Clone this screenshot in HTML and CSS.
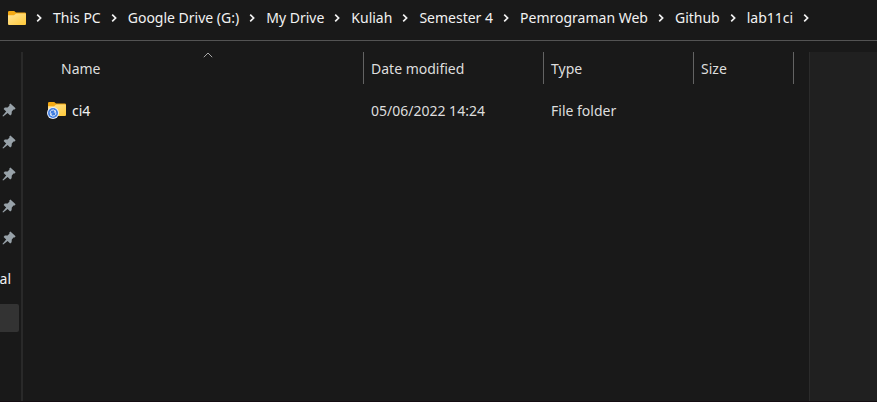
FILE: index.html
```html
<!DOCTYPE html>
<html lang="en">
<head>
<meta charset="utf-8">
<title>lab11ci</title>
<link rel="stylesheet" href="styles.css">
</head>
<body>
<svg class="defs" aria-hidden="true">
  <defs>
    <linearGradient id="gold" x1="0" y1="0" x2="1" y2="1">
      <stop offset="0" stop-color="#ffe49a"/><stop offset="1" stop-color="#ffc937"/>
    </linearGradient>
    <symbol id="folder" viewBox="0 0 18 14">
      <path d="M0 1.2Q0 0 1.2 0H6.2L8 1.5H16.8Q18 1.5 18 2.6V6H0Z" fill="#f4a913"/>
      <path d="M0 4.2H6L8.2 2.4H17.2Q18 2.4 18 3.2V13Q18 14 17 14H1Q0 14 0 13Z" fill="url(#gold)"/>
    </symbol>
    <symbol id="chevron" viewBox="0 0 7 8">
      <path d="M1.2 0.7L4.6 4L1.2 7.3" fill="none" stroke="#f2f2f2" stroke-width="1.7"/>
    </symbol>
    <symbol id="pin" viewBox="0 0 14 14">
      <path d="M8.4 0.4L13.6 5.2L12.6 6.6L11.5 6.4L9.8 8.6L9.6 11.2L8.2 12.4L5.6 10L1.2 13.6L0.4 12.9L4.2 8.6L1.6 6L2.8 4.6L5.6 4.4L7.5 2.6L7.3 1.4Z" fill="#98a2a9"/>
    </symbol>
  </defs>
</svg>
<header class="address">
  <svg class="folder" aria-hidden="true"><use href="#folder"/></svg>
  <svg class="chevron" aria-hidden="true"><use href="#chevron"/></svg>
  <a href="#">This PC</a>
  <svg class="chevron" aria-hidden="true"><use href="#chevron"/></svg>
  <a href="#">Google Drive (G:)</a>
  <svg class="chevron" aria-hidden="true"><use href="#chevron"/></svg>
  <a href="#">My Drive</a>
  <svg class="chevron" aria-hidden="true"><use href="#chevron"/></svg>
  <a href="#">Kuliah</a>
  <svg class="chevron" aria-hidden="true"><use href="#chevron"/></svg>
  <a href="#">Semester 4</a>
  <svg class="chevron" aria-hidden="true"><use href="#chevron"/></svg>
  <a href="#">Pemrograman Web</a>
  <svg class="chevron" aria-hidden="true"><use href="#chevron"/></svg>
  <a href="#">Github</a>
  <svg class="chevron" aria-hidden="true"><use href="#chevron"/></svg>
  <a href="#">lab11ci</a>
  <svg class="chevron" aria-hidden="true"><use href="#chevron"/></svg>
</header>
<div class="body">
  <nav class="sidebar">
    <div class="entry"><svg class="pin" aria-hidden="true"><use href="#pin"/></svg></div>
    <div class="entry"><svg class="pin" aria-hidden="true"><use href="#pin"/></svg></div>
    <div class="entry"><svg class="pin" aria-hidden="true"><use href="#pin"/></svg></div>
    <div class="entry"><svg class="pin" aria-hidden="true"><use href="#pin"/></svg></div>
    <div class="entry"><svg class="pin" aria-hidden="true"><use href="#pin"/></svg></div>
    <a class="label" href="#">al</a>
    <div class="selected"></div>
  </nav>
  <main class="files">
    <table>
      <colgroup><col class="c-name"><col class="c-date"><col class="c-type"><col class="c-size"></colgroup>
      <thead>
        <tr>
          <th class="name">Name
            <svg class="sort" viewBox="0 0 10 6" aria-hidden="true"><path d="M0.8 5.2L5 1L9.2 5.2" fill="none" stroke="#a8a8a8"/></svg>
          </th>
          <th>Date modified</th><th>Type</th><th>Size</th>
        </tr>
      </thead>
      <tbody>
        <tr>
          <td><div class="file">
            <svg class="synced" viewBox="0 0 20 18" aria-hidden="true">
              <use href="#folder" x="1" y="0" width="18" height="14"/>
              <circle cx="6" cy="11" r="6" fill="#e8eefb"/>
              <circle cx="6" cy="11" r="5" fill="#3f7de0"/>
              <path d="M3.2 11.6A2.8 2.8 0 0 1 8.2 9.2M8.8 10.4A2.8 2.8 0 0 1 3.8 12.8" fill="none" stroke="#e8eefb"/>
              <path d="M8.9 8v2.4H6.5ZM3.1 14v-2.4H5.5Z" fill="#e8eefb"/>
            </svg>
            <span>ci4</span></div></td>
          <td>05/06/2022 14:24</td><td>File folder</td><td></td>
        </tr>
      </tbody>
    </table>
  </main>
  <aside class="preview"></aside>
</div>
</body>
</html>
```
FILE: styles.css
```css
* { box-sizing: border-box; }
body {
  margin: 0;
  min-height: 100vh;
  display: flex;
  flex-direction: column;
  background: #191919;
  color: #dedede;
  font: 14px/20px "Noto Sans", "Open Sans", sans-serif;
  border-bottom: 1px solid #140d12;
}
a { color: inherit; text-decoration: none; white-space: nowrap; }
svg { display: block; flex: none; }
.defs { position: absolute; width: 0; height: 0; }
.address {
  display: flex;
  align-items: center;
  height: 41px;
  padding: 0 8px 4px;
  gap: 10px;
  color: #f2f2f2;
  border-bottom: 1px solid #535353;
}
.folder { width: 18px; height: 14px; }
.chevron { width: 7px; height: 8px; }
.body {
  flex: 1;
  display: grid;
  grid-template-columns: 23px 1fr 68px;
  padding-top: 11px;
}
.sidebar {
  border-right: 2px solid #292929;
  padding-top: 42px;
  overflow: hidden;
}
.entry { height: 32px; display: flex; align-items: center; padding-left: 2px; }
.pin { width: 14px; height: 14px; }
.label { display: flex; justify-content: flex-end; width: 11px; margin-top: 15px; color: #f2f2f2; }
.selected { width: 19px; height: 28px; margin-top: 15px; background: #333; border-radius: 0 2px 2px 0; }
table { width: 771px; border-collapse: separate; border-spacing: 0; table-layout: fixed; }
.c-name { width: 341px; }
.c-date { width: 180px; }
.c-type { width: 150px; }
.c-size { width: 100px; }
th, td { padding: 0 0 0 7px; text-align: left; font-weight: 400; }
th { position: relative; height: 32px; padding-top: 2px; border-right: 1px solid #636363; }
th.name { padding-left: 38px; }
.sort { position: absolute; top: 0; left: 180px; width: 10px; height: 6px; }
td { height: 53px; }
.file { display: flex; align-items: center; gap: 5px; padding-left: 17px; color: #f2f2f2; }
.synced { width: 20px; height: 18px; }
.preview { background: #202020; border-left: 1px solid #2b2b2b; }
```
